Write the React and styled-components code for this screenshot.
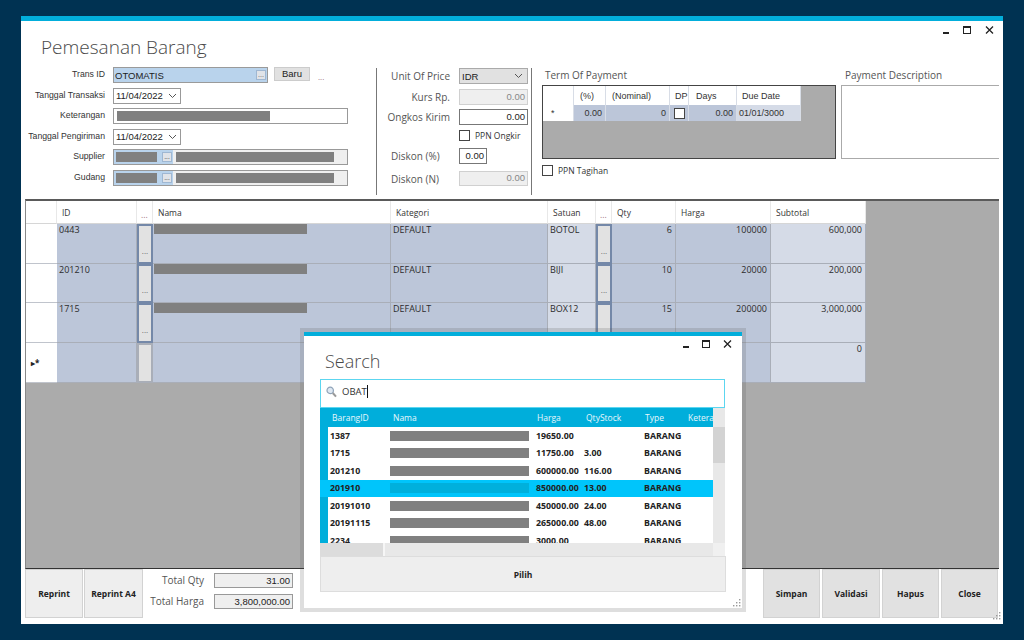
import React from "react";
import styled, { createGlobalStyle } from "styled-components";

const Global = createGlobalStyle`
  html, body { margin: 0; padding: 0; }
  body { font-family: "Open Sans", "Noto Sans", sans-serif; color: #222; }
  * { box-sizing: border-box; }
`;

const Page = styled.div`
  position: relative;
  width: 1024px;
  height: 640px;
  padding: 16px 21px;
  background: #003252;
  overflow: hidden;
`;
const MainWindow = styled.div`
  position: relative;
  display: flex;
  flex-direction: column;
  height: 608px;
  background: #fff;
  border-top: 5px solid #02aedb;
`;
const Controls = styled.div`
  position: absolute;
  top: ${(p) => p.$top}px;
  right: ${(p) => p.$right}px;
  display: flex;
  align-items: center;
  gap: ${(p) => p.$gap}px;
`;
const Header = styled.div`
  display: flex;
  align-items: flex-start;
  height: 178px;
  flex: none;
`;
const LeftPanel = styled.div`
  width: 355px;
  flex: none;
`;
const Title = styled.div`
  height: 46px;
  padding: 13px 0 0 20px;
  font-size: 19px;
  line-height: 26px;
  font-weight: 300;
  color: #4a4a4a;
`;
const Form = styled.div`
  display: grid;
  grid-template-columns: 84px 235px;
  grid-auto-rows: 16px;
  column-gap: 8px;
  row-gap: 4.6px;
`;
const FormLabel = styled.div`
  font-family: "Liberation Sans", sans-serif;
  font-size: 8.7px;
  line-height: 14px;
  text-align: right;
  white-space: nowrap;
  color: #333;
`;
const FieldRow = styled.div`
  display: flex;
  align-items: flex-start;
  gap: 6px;
`;
const TransField = styled.div`
  display: flex;
  align-items: center;
  justify-content: space-between;
  width: 155px;
  height: 16px;
  padding: 0 1px 0 1px;
  background: #b9d3ec;
  border: 1px solid #9a9a9a;
  font-family: "Liberation Sans", sans-serif;
  font-size: 9.5px;
  color: #1c1c1c;
`;
const MiniButton = styled.div`
  display: flex;
  justify-content: center;
  width: 10px;
  height: 10px;
  flex: none;
  background: #e0e3e8;
  border: 1px solid #9fb7d2;
  font-size: 7px;
  line-height: 7px;
  color: #555;
`;
const PlainButton = styled.div`
  width: 36px;
  height: 14px;
  background: #e1e1e1;
  border: 1px solid #ccc;
  font-family: "Liberation Sans", sans-serif;
  font-size: 9.5px;
  line-height: 12px;
  text-align: center;
`;
const Dots = styled.span`
  margin: 6px 0 0 2px;
  font-size: 8px;
  line-height: 8px;
  color: #a07080;
`;
const DateField = styled.div`
  display: flex;
  align-items: center;
  justify-content: space-between;
  width: 68px;
  height: 16px;
  padding: 0 3px 0 2px;
  background: #fff;
  border: 1px solid #999;
  font-family: "Liberation Sans", sans-serif;
  font-size: 9.5px;
`;
const TextField = styled.div`
  display: flex;
  align-items: center;
  width: 235px;
  height: 16px;
  padding-left: 3px;
  background: #fff;
  border: 1px solid #999;
`;
const LookupField = styled.div`
  display: flex;
  align-items: center;
  width: 235px;
  height: 16px;
  background: #efefef;
  border: 1px solid #999;
`;
const LookupCode = styled.div`
  display: flex;
  align-items: center;
  justify-content: space-between;
  width: 59px;
  height: 14px;
  padding: 0 1px 0 2px;
  margin-right: 3px;
  background: #b9d3ec;
`;
const GrayBar = styled.div`
  width: ${(p) => p.$w}px;
  height: 10px;
  flex: none;
  margin-left: ${(p) => p.$shift || 0}px;
  background: ${(p) => p.$c || "#808080"};
`;
const MiddlePanel = styled.div`
  width: 155px;
  height: 127px;
  margin-top: 47px;
  flex: none;
  border-left: 1px solid #777;
`;
const MidRow = styled.div`
  display: flex;
  align-items: center;
  height: ${(p) => p.$h || 16}px;
  margin-top: ${(p) => p.$top || 0}px;
`;
const MidLabel = styled.div`
  width: 73px;
  margin-right: 9px;
  flex: none;
  padding-left: ${(p) => (p.$left ? 14 : 0)}px;
  font-size: 10px;
  text-align: ${(p) => (p.$left ? "left" : "right")};
  white-space: nowrap;
  color: #555;
`;
const SelectField = styled.div`
  display: flex;
  align-items: center;
  justify-content: space-between;
  width: 69px;
  height: 16px;
  padding: 0 4px 0 2px;
  background: #e1e1e1;
  border: 1px solid #aaa;
  font-family: "Liberation Sans", sans-serif;
  font-size: 9.5px;
`;
const NumField = styled.div`
  width: ${(p) => p.$w || 69}px;
  height: ${(p) => p.$h || 16}px;
  padding-right: 2px;
  background: ${(p) => (p.$disabled ? "#efefef" : "#fff")};
  border: 1px solid ${(p) => (p.$disabled ? "#d0d0d0" : "#777")};
  font-family: "Liberation Sans", sans-serif;
  font-size: 9.5px;
  line-height: ${(p) => (p.$h || 16) - 3}px;
  text-align: right;
  color: ${(p) => (p.$disabled ? "#888" : "#222")};
`;
const CheckBox = styled.span`
  display: inline-block;
  width: 11px;
  height: 11px;
  flex: none;
  background: #fff;
  border: 1px solid #444;
`;
const CheckLabel = styled.div`
  display: flex;
  align-items: center;
  gap: 5px;
  font-size: 8.5px;
  white-space: nowrap;
  color: #333;
`;
const TermPanel = styled.div`
  width: 310px;
  height: 127px;
  margin-top: 47px;
  padding-left: 10px;
  flex: none;
  border-left: 1px solid #777;
`;
const PanelLabel = styled.div`
  height: 17px;
  padding-left: ${(p) => p.$pad}px;
  font-size: 10px;
  line-height: 15px;
  white-space: nowrap;
  color: #555;
`;
const TermBox = styled.div`
  width: 294px;
  height: 74px;
  margin-bottom: 6px;
  background: #ababab;
  border: 1px solid #444;
`;
const TermRow = styled.div`
  display: grid;
  grid-template-columns: 31px 32px 64px 19px 48px 64px;
  height: ${(p) => p.$h}px;
  width: 258px;
`;
const TermCell = styled.div`
  display: flex;
  align-items: center;
  justify-content: ${(p) => p.$align || "flex-start"};
  padding: 0 3px 0 ${(p) => p.$pad ?? 4}px;
  background: ${(p) => p.$bg || "#fff"};
  border-right: 1px solid #d8dde6;
  font-family: "Liberation Sans", sans-serif;
  font-size: 9px;
  white-space: nowrap;
  color: #333;
`;
const PaymentPanel = styled.div`
  width: 158px;
  margin-top: 47px;
  flex: none;
`;
const PaymentBox = styled.div`
  height: 74px;
  border: 1px solid #aaa;
  border-right: none;
`;
const GridBox = styled.div`
  flex: none;
  height: 370px;
  margin: 0 4px;
  background: #ababab;
  border-top: 2px solid #5a5a5a;
  border-bottom: 1px solid #333;
  border-left: 1px solid #888;
  overflow: hidden;
`;
const GridRow = styled.div`
  display: grid;
  grid-template-columns: 31px 80px 16px 238px 157px 48px 16px 64px 95px 95px;
  height: ${(p) => p.$h}px;
  width: 840px;
`;
const HeadCell = styled.div`
  padding: 6px 0 0 5px;
  background: #fff;
  border-right: 1px solid #e8e8e8;
  border-bottom: 1px solid #d6d6d6;
  font-size: 8.5px;
  line-height: 12px;
  color: #333;
`;
const HeadDots = styled(HeadCell)`
  padding: 8px 0 0 4px;
  color: #a07080;
`;
const RowHeader = styled.div`
  display: flex;
  align-items: center;
  padding-left: 5px;
  background: #fff;
  border-bottom: 1px solid #c0c4cc;
  font-size: 8px;
  font-weight: 700;
  color: #222;
`;
const DataCell = styled.div`
  padding: 0 3px 0 2px;
  background: ${(p) => (p.$light ? "#d5dbe7" : "#bcc6d9")};
  border-right: 1px solid #a9aeb8;
  border-bottom: 1px solid #a9aeb8;
  font-size: 9px;
  line-height: 12px;
  text-align: ${(p) => (p.$right ? "right" : "left")};
  color: #2c2c2c;
  white-space: nowrap;
`;
const ButtonCell = styled.div`
  display: flex;
  align-items: flex-end;
  justify-content: center;
  padding-bottom: 7px;
  background: #e2e2e2;
  border: 2px solid ${(p) => (p.$empty ? "#a9aeb8" : "#7488a8")};
  font-size: 8px;
  line-height: 8px;
  color: #666;
`;
const Footer = styled.div`
  display: flex;
  align-items: flex-start;
  flex: 1;
  padding: 0 5px 0 4px;
`;
const ActionButton = styled.div`
  display: flex;
  align-items: center;
  justify-content: center;
  width: ${(p) => p.$w}px;
  height: 49px;
  flex: none;
  background: ${(p) => p.$bg};
  border: 1px solid #d2d2d2;
  font-size: 8.5px;
  font-weight: 700;
  color: #222;
`;
const LeftActions = styled.div`
  display: flex;
  gap: 1px;
`;
const RightActions = styled.div`
  display: flex;
  gap: 2px;
  margin-left: auto;
`;
const Totals = styled.div`
  display: grid;
  grid-template-columns: 61px 79px;
  column-gap: 10px;
  row-gap: 6px;
  margin-top: 4px;
`;
const TotalLabel = styled.div`
  font-size: 10px;
  line-height: 15px;
  text-align: right;
  color: #555;
`;
const TotalField = styled.div`
  height: 15px;
  padding-right: 2px;
  background: #efefef;
  border: 1px solid #999;
  font-family: "Liberation Sans", sans-serif;
  font-size: 9.5px;
  line-height: 13px;
  text-align: right;
`;
const Grip = styled.svg`
  position: absolute;
  right: ${(p) => p.$right}px;
  bottom: ${(p) => p.$bottom}px;
`;
const Dialog = styled.div`
  position: absolute;
  left: 304px;
  top: 332px;
  width: 438px;
  height: 276px;
  padding: 0 16px;
  background: #fff;
  border-top: 4px solid #02aedb;
  box-shadow: 0 0 0 4px rgba(90, 90, 90, 0.2);
`;
const DialogTitle = styled.div`
  height: 43px;
  padding-top: 13px;
  padding-left: 5px;
  font-size: 18px;
  line-height: 24px;
  font-weight: 300;
  color: #4a4a4a;
`;
const SearchBox = styled.div`
  display: flex;
  align-items: flex-start;
  gap: 5px;
  width: 405px;
  height: 29px;
  padding: 5px 0 0 5px;
  border: 1px solid #5cd6f0;
  font-size: 9.5px;
  line-height: 13px;
  color: #333;
`;
const Caret = styled.span`
  border-right: 1px solid #111;
`;
const ListArea = styled.div`
  display: grid;
  grid-template-columns: 393px 12px;
  grid-template-rows: 135px 13px;
  width: 405px;
`;
const ListBody = styled.div`
  overflow: hidden;
`;
const ListHead = styled.div`
  display: grid;
  grid-template-columns: 61px 144px 49px 59px 43px 40px;
  align-items: center;
  height: 19px;
  padding-left: 12px;
  background: #00aedb;
  font-size: 8.5px;
  color: #e8f7fb;
  white-space: nowrap;
  overflow: hidden;
`;
const ListRow = styled.div`
  display: grid;
  grid-template-columns: 60px 146px 48px 60px 69px;
  align-items: center;
  height: 17.5px;
  padding-left: 10px;
  background: ${(p) => (p.$selected ? "#00c5fb" : "#fff")};
  box-shadow: ${(p) => (p.$selected ? "none" : "inset 8px 0 0 #00aedb")};
  font-size: 8.8px;
  font-weight: 700;
  line-height: 16.5px;
  color: #222;
  white-space: nowrap;
`;
const VScroll = styled.div`
  display: flex;
  flex-direction: column;
  background: #e8e8e8;
`;
const VUp = styled.div`
  height: 19px;
  background: #e8e8e8;
`;
const VThumb = styled.div`
  height: 36px;
  background: #d3d3d3;
`;
const HScroll = styled.div`
  display: flex;
  background: #e8e8e8;
`;
const HThumb = styled.div`
  width: 65px;
  background: #dcdcdc;
  border-right: 2px solid #f6f6f6;
`;
const Corner = styled.div`
  background: #f0f0f0;
`;
const PilihButton = styled.div`
  display: flex;
  align-items: center;
  justify-content: center;
  width: 406px;
  height: 36px;
  background: #eee;
  border: 1px solid #ddd;
  font-size: 8.5px;
  font-weight: 700;
  color: #222;
`;

const Chevron = () => (
  <svg width="9" height="6" viewBox="0 0 9 6"><path d="M1 1l3.5 3.5L8 1" fill="none" stroke="#555" strokeWidth="1" /></svg>
);
const MinIcon = () => (
  <svg width="6" height="8" viewBox="0 0 6 8"><rect x="0" y="6" width="6" height="2" fill="#222" /></svg>
);
const MaxIcon = () => (
  <svg width="8" height="8" viewBox="0 0 8 8"><rect x="0.5" y="0.5" width="7" height="7" fill="none" stroke="#222" /><rect x="0" y="0" width="8" height="2" fill="#222" /></svg>
);
const CloseIcon = () => (
  <svg width="9" height="8" viewBox="0 0 9 8"><path d="M1 0.5l7 7M8 0.5l-7 7" stroke="#222" strokeWidth="1.3" /></svg>
);
const GripIcon = ({ right, bottom }) => (
  <Grip $right={right} $bottom={bottom} width="9" height="9" viewBox="0 0 9 9" fill="#9a9a9a">
    <rect x="7" y="1" width="1.4" height="1.4" />
    <rect x="4" y="4" width="1.4" height="1.4" />
    <rect x="7" y="4" width="1.4" height="1.4" />
    <rect x="1" y="7" width="1.4" height="1.4" />
    <rect x="4" y="7" width="1.4" height="1.4" />
    <rect x="7" y="7" width="1.4" height="1.4" />
  </Grip>
);
const SearchIcon = () => (
  <svg width="11" height="12" viewBox="0 0 11 12" style={{ marginTop: 1 }}>
    <circle cx="4.2" cy="4.4" r="3.2" fill="#dfe8f2" stroke="#8fa3b8" strokeWidth="1.2" />
    <path d="M6.8 7l3.2 3.6" stroke="#9a9a9a" strokeWidth="2" />
  </svg>
);

const gridRows = [
  { id: "0443", sat: "BOTOL", qty: "6", harga: "100000", sub: "600,000" },
  { id: "201210", sat: "BIJI", qty: "10", harga: "20000", sub: "200,000" },
  { id: "1715", sat: "BOX12", qty: "15", harga: "200000", sub: "3,000,000" },
];
const listRows = [
  ["1387", "19650.00", "", "BARANG"],
  ["1715", "11750.00", "3.00", "BARANG"],
  ["201210", "600000.00", "116.00", "BARANG"],
  ["201910", "850000.00", "13.00", "BARANG", true],
  ["20191010", "450000.00", "24.00", "BARANG"],
  ["20191115", "265000.00", "48.00", "BARANG"],
  ["2234", "3000.00", "", "BARANG"],
];

export default function App() {
  return (
    <Page>
      <Global />
      <MainWindow>
        <Controls $top={5} $right={9} $gap={14}>
          <MinIcon />
          <MaxIcon />
          <CloseIcon />
        </Controls>
        <Header>
          <LeftPanel>
            <Title>Pemesanan Barang</Title>
            <Form>
              <FormLabel>Trans ID</FormLabel>
              <FieldRow>
                <TransField>OTOMATIS<MiniButton>...</MiniButton></TransField>
                <PlainButton>Baru</PlainButton>
                <Dots>...</Dots>
              </FieldRow>
              <FormLabel>Tanggal Transaksi</FormLabel>
              <DateField>11/04/2022<Chevron /></DateField>
              <FormLabel>Keterangan</FormLabel>
              <TextField><GrayBar $w={153} /></TextField>
              <FormLabel>Tanggal Pengiriman</FormLabel>
              <DateField>11/04/2022<Chevron /></DateField>
              <FormLabel>Supplier</FormLabel>
              <LookupField>
                <LookupCode><GrayBar $w={41} /><MiniButton>...</MiniButton></LookupCode>
                <GrayBar $w={158} />
              </LookupField>
              <FormLabel>Gudang</FormLabel>
              <LookupField>
                <LookupCode><GrayBar $w={41} /><MiniButton>...</MiniButton></LookupCode>
                <GrayBar $w={158} />
              </LookupField>
            </Form>
          </LeftPanel>
          <MiddlePanel>
            <MidRow>
              <MidLabel>Unit Of Price</MidLabel>
              <SelectField>IDR<Chevron /></SelectField>
            </MidRow>
            <MidRow $top={5}>
              <MidLabel>Kurs Rp.</MidLabel>
              <NumField $disabled>0.00</NumField>
            </MidRow>
            <MidRow $top={4}>
              <MidLabel>Ongkos Kirim</MidLabel>
              <NumField>0.00</NumField>
            </MidRow>
            <MidRow $top={5} $h={10}>
              <MidLabel />
              <CheckLabel><CheckBox />PPN Ongkir</CheckLabel>
            </MidRow>
            <MidRow $top={8}>
              <MidLabel $left>Diskon (%)</MidLabel>
              <NumField $w={28}>0.00</NumField>
            </MidRow>
            <MidRow $top={7} $h={15}>
              <MidLabel $left>Diskon (N)</MidLabel>
              <NumField $disabled $h={15}>0.00</NumField>
            </MidRow>
          </MiddlePanel>
          <TermPanel>
            <PanelLabel $pad={3}>Term Of Payment</PanelLabel>
            <TermBox>
              <TermRow $h={19}>
                <TermCell />
                <TermCell $pad={6}>(%)</TermCell>
                <TermCell $pad={6}>(Nominal)</TermCell>
                <TermCell $pad={5}>DP</TermCell>
                <TermCell $pad={7}>Days</TermCell>
                <TermCell $pad={5}>Due Date</TermCell>
              </TermRow>
              <TermRow $h={16}>
                <TermCell $pad={8}>*</TermCell>
                <TermCell $bg="#bcc6d9" $align="flex-end">0.00</TermCell>
                <TermCell $bg="#bcc6d9" $align="flex-end">0</TermCell>
                <TermCell $bg="#bcc6d9"><CheckBox /></TermCell>
                <TermCell $bg="#bcc6d9" $align="flex-end">0.00</TermCell>
                <TermCell $bg="#d5dbe7" $pad={2}>01/01/3000</TermCell>
              </TermRow>
            </TermBox>
            <CheckLabel><CheckBox />PPN Tagihan</CheckLabel>
          </TermPanel>
          <PaymentPanel>
            <PanelLabel $pad={4}>Payment Description</PanelLabel>
            <PaymentBox />
          </PaymentPanel>
        </Header>
        <GridBox>
          <GridRow $h={23}>
            <HeadCell />
            <HeadCell>ID</HeadCell>
            <HeadDots>...</HeadDots>
            <HeadCell>Nama</HeadCell>
            <HeadCell>Kategori</HeadCell>
            <HeadCell>Satuan</HeadCell>
            <HeadDots>...</HeadDots>
            <HeadCell>Qty</HeadCell>
            <HeadCell>Harga</HeadCell>
            <HeadCell>Subtotal</HeadCell>
          </GridRow>
          {gridRows.map((r) => (
            <GridRow $h={39.7} key={r.id}>
              <RowHeader />
              <DataCell>{r.id}</DataCell>
              <ButtonCell>...</ButtonCell>
              <DataCell><GrayBar $w={153} $shift={-1} /></DataCell>
              <DataCell>DEFAULT</DataCell>
              <DataCell $light>{r.sat}</DataCell>
              <ButtonCell>...</ButtonCell>
              <DataCell $right>{r.qty}</DataCell>
              <DataCell $right>{r.harga}</DataCell>
              <DataCell $right $light>{r.sub}</DataCell>
            </GridRow>
          ))}
          <GridRow $h={39.7}>
            <RowHeader>▸*</RowHeader>
            <DataCell />
            <ButtonCell $empty />
            <DataCell />
            <DataCell />
            <DataCell $light />
            <ButtonCell $empty />
            <DataCell />
            <DataCell />
            <DataCell $right $light>0</DataCell>
          </GridRow>
        </GridBox>
        <Footer>
          <LeftActions>
            <ActionButton $w={58} $bg="#eee">Reprint</ActionButton>
            <ActionButton $w={59} $bg="#eee">Reprint A4</ActionButton>
          </LeftActions>
          <Totals>
            <TotalLabel>Total Qty</TotalLabel>
            <TotalField>31.00</TotalField>
            <TotalLabel>Total Harga</TotalLabel>
            <TotalField>3,800,000.00</TotalField>
          </Totals>
          <RightActions>
            <ActionButton $w={57} $bg="#e1e1e1">Simpan</ActionButton>
            <ActionButton $w={58} $bg="#e1e1e1">Validasi</ActionButton>
            <ActionButton $w={57} $bg="#e1e1e1">Hapus</ActionButton>
            <ActionButton $w={57} $bg="#e1e1e1">Close</ActionButton>
          </RightActions>
        </Footer>
        <GripIcon right={2} bottom={4} />
      </MainWindow>
      <Dialog>
        <Controls $top={4} $right={10} $gap={13}>
          <MinIcon />
          <MaxIcon />
          <CloseIcon />
        </Controls>
        <DialogTitle>Search</DialogTitle>
        <SearchBox>
          <SearchIcon />
          <span>OBA<Caret>T</Caret></span>
        </SearchBox>
        <ListArea>
          <ListBody>
            <ListHead>
              <span>BarangID</span>
              <span>Nama</span>
              <span>Harga</span>
              <span>QtyStock</span>
              <span>Type</span>
              <span>Keterangan</span>
            </ListHead>
            {listRows.map(([id, harga, qty, type, sel]) => (
              <ListRow key={id} $selected={sel}>
                <span>{id}</span>
                <GrayBar $w={139} $c={sel ? "#00b0dc" : undefined} />
                <span>{harga}</span>
                <span>{qty}</span>
                <span>{type}</span>
              </ListRow>
            ))}
          </ListBody>
          <VScroll>
            <VUp />
            <VThumb />
          </VScroll>
          <HScroll><HThumb /></HScroll>
          <Corner />
        </ListArea>
        <PilihButton>Pilih</PilihButton>
        <GripIcon right={1} bottom={1} />
      </Dialog>
    </Page>
  );
}
